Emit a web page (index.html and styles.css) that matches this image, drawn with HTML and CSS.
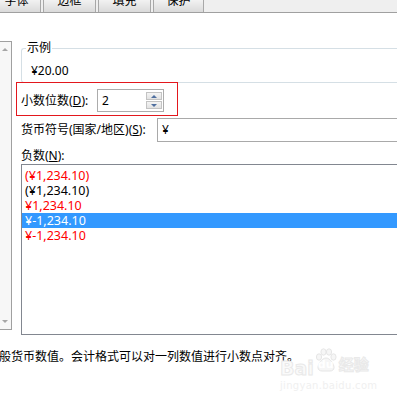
FILE: index.html
```html
<!DOCTYPE html>
<html lang="zh-CN">

<head>
    <meta charset="UTF-8">
    <meta name="viewport" content="width=device-width, initial-scale=1.0">
    <title>设置单元格格式</title>
    <link rel="stylesheet" href="styles.css">
</head>

<body>
    <div class="tabs">
        <div class="tab first"><span class="tab-label">字体</span></div>
        <div class="tab"><span class="tab-label">边框</span></div>
        <div class="tab"><span class="tab-label">填充</span></div>
        <div class="tab last"><span class="tab-label">保护</span></div>
    </div>

    <div class="main">
        <div class="scroll">
            <span class="arrow up"></span>
            <span class="arrow down"></span>
        </div>

        <div class="content">
            <fieldset class="sample">
                <legend>示例</legend>
                <div class="sample-value">¥20.00</div>
            </fieldset>

            <div class="row decimals">
                <label class="label">小数位数(<u>D</u>):</label>
                <div class="spin">
                    <span class="spin-value">2</span>
                    <div class="spin-btns">
                        <span class="spin-btn"><i class="tri up"></i></span>
                        <span class="spin-btn"><i class="tri down"></i></span>
                    </div>
                </div>
            </div>

            <div class="row currency">
                <label class="label">货币符号(国家/地区)(<u>S</u>):</label>
                <div class="select">¥</div>
            </div>

            <div class="neg-label">负数(<u>N</u>):</div>
            <ul class="list">
                <li class="red">(¥1,234.10)</li>
                <li>(¥1,234.10)</li>
                <li class="red">¥1,234.10</li>
                <li class="selected">¥-1,234.10</li>
                <li class="red">¥-1,234.10</li>
            </ul>
        </div>
    </div>

    <p class="note">般货币数值。会计格式可以对一列数值进行小数点对齐。</p>

    <!-- annotation box drawn over the dialog -->
    <div class="mark"></div>

    <div class="watermark">
        <div class="wm-top">
            <span class="wm-bai">Bai</span>
            <span class="wm-paw">
                <svg width="22" height="24" viewBox="0 0 22 24">
                    <ellipse cx="4" cy="9" rx="2.6" ry="3.2" />
                    <ellipse cx="8.5" cy="4" rx="2.6" ry="3.2" />
                    <ellipse cx="14" cy="4" rx="2.6" ry="3.2" />
                    <ellipse cx="18.5" cy="9" rx="2.6" ry="3.2" />
                    <path d="M11 10c-4 0-8 6-8 9.5 0 2.5 2 3.5 4 3.5h8c2 0 4-1 4-3.5C19 16 15 10 11 10z" />
                </svg>
                <span class="wm-du">du</span>
            </span>
            <span class="wm-jy">经验</span>
        </div>
        <div class="wm-url">jingyan.baidu.com</div>
    </div>
</body>

</html>
```

FILE: styles.css
```css
* {
    margin: 0;
    padding: 0;
    box-sizing: border-box;
}

body {
    position: relative;
    width: 397px;
    height: 402px;
    overflow: hidden;
    background: #fff;
    color: #000;
    font-family: "Noto Sans", "Noto Sans CJK SC", sans-serif;
    font-size: 12px;
    line-height: 16px;
}

u {
    text-decoration: underline;
    text-underline-offset: 1px;
}

/* tab strip, cut at the top of the picture */
.tabs {
    display: flex;
    gap: 2px;
    height: 13px;
    background: #efefef;
    border-bottom: 1px solid #a0a0a0;
    overflow: hidden;
}

.tab {
    width: 53px;
    height: 12px;
    border-left: 1px solid #a8a8a8;
    border-right: 1px solid #a8a8a8;
    background: linear-gradient(#f2f2f2, #dadada);
    text-align: center;
    overflow: hidden;
}

.tab.first {
    width: 42px;
    margin-left: -1px;
    padding-right: 7px;
}

.tab.last {
    width: 51px;
}

.tab-label {
    display: block;
    margin-top: -7px;
    line-height: 16px;
}

.main {
    display: flex;
}

/* remains of the category list on the left */
.scroll {
    display: flex;
    flex-direction: column;
    justify-content: space-between;
    width: 12px;
    height: 289px;
    margin-top: 28px;
    background: #f7f7f7;
    border: 1px solid #a0a0a0;
    border-left: none;
    padding: 6px 0 6px 2px;
}

.arrow {
    width: 0;
    height: 0;
    border-left: 3px solid transparent;
    border-right: 3px solid transparent;
}

.arrow.up {
    border-bottom: 3px solid #a6a6a6;
}

.arrow.down {
    border-top: 3px solid #a6a6a6;
}

.content {
    flex: 1;
    margin-left: 9px;
    margin-right: -10px;
}

.sample {
    margin-top: 29px;
    height: 41px;
    border: 1px solid #d5dfe5;
    border-right: none;
    border-radius: 3px 0 0 3px;
    padding: 0 0 0 9px;
}

.sample legend {
    margin-left: -5px;
    padding: 0 1px;
    line-height: 12px;
}

.sample-value {
    margin-top: 9px;
}

.row {
    display: flex;
    align-items: center;
}

.label {
    flex: none;
}

.decimals {
    margin-top: 6px;
}

.decimals .label {
    width: 76px;
}

.spin {
    display: flex;
    align-items: center;
    justify-content: space-between;
    width: 67px;
    height: 23px;
    border: 1px solid #acacac;
    padding: 0 1px 0 4px;
}

.spin-btns {
    display: flex;
    flex-direction: column;
    gap: 1px;
}

.spin-btn {
    display: flex;
    align-items: center;
    justify-content: center;
    width: 16px;
    height: 8px;
    border: 1px solid #c3c3c3;
    background: linear-gradient(#f4f4f4, #e2e2e2);
}

.tri {
    width: 0;
    height: 0;
    border-left: 3px solid transparent;
    border-right: 3px solid transparent;
}

.tri.up {
    border-bottom: 3px solid #4f6f9f;
}

.tri.down {
    border-top: 3px solid #4f6f9f;
}

.currency {
    margin-top: 6px;
}

.currency .label {
    width: 136px;
}

.select {
    flex: 1;
    height: 24px;
    border: 1px solid #a9a9a9;
    border-right: none;
    padding-left: 4px;
    line-height: 22px;
}

.neg-label {
    margin-top: 6px;
}

.list {
    list-style: none;
    height: 171px;
    border: 1px solid #828790;
    border-right: none;
    padding-top: 3px;
}

.list li {
    height: 15px;
    line-height: 15px;
    padding-left: 3px;
    font-size: 12.5px;
}

.list .red {
    color: #ff0000;
}

.list .selected {
    background: #3399ff;
    color: #fff;
}

.note {
    margin: 14px 0 0 -1px;
    white-space: nowrap;
}

.mark {
    position: absolute;
    left: 16px;
    top: 82px;
    width: 162px;
    height: 34px;
    border: 1px solid #e3171d;
}

.watermark {
    position: absolute;
    left: 280px;
    top: 346px;
    color: #fafafa;
    -webkit-text-stroke: 1px #e9e9e9;
    font-family: "DejaVu Sans", sans-serif;
    font-weight: bold;
}

.wm-top {
    display: flex;
    align-items: flex-end;
    height: 32px;
}

.wm-bai {
    font-size: 19px;
    line-height: 20px;
    margin-right: 1px;
}

.wm-paw {
    position: relative;
    display: inline-block;
    width: 22px;
    height: 24px;
    margin-bottom: 6px;
}

.wm-paw svg {
    fill: #f6f6f6;
    stroke: #e6e6e6;
    stroke-width: 1;
}

.wm-du {
    position: absolute;
    left: 3px;
    top: 11px;
    font-size: 11px;
    line-height: 12px;
    color: #fff;
    -webkit-text-stroke: 0;
}

.wm-jy {
    font-family: "Noto Sans CJK SC", sans-serif;
    font-size: 15px;
    line-height: 20px;
    margin-left: 2px;
    margin-bottom: 4px;
}

.wm-url {
    font-size: 10px;
    line-height: 12px;
    margin-top: 2px;
    letter-spacing: 0.3px;
    font-weight: normal;
    color: #f0f0f0;
    -webkit-text-stroke: 0;
}
```
